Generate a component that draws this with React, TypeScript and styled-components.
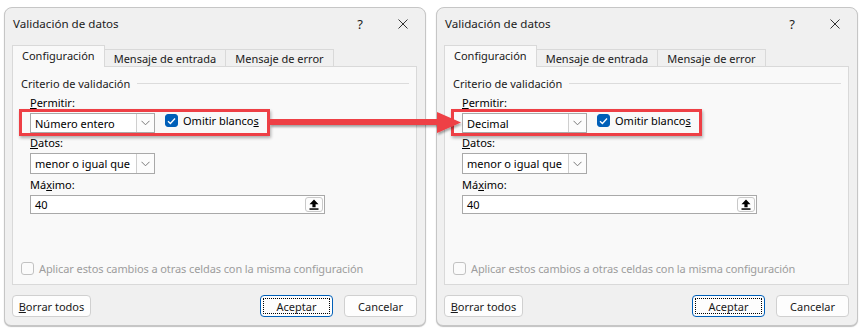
import React from 'react'
import styled, { createGlobalStyle } from 'styled-components'

const GlobalStyle = createGlobalStyle`
  body {
    margin: 0;
    background: #fff;
    font-family: 'Noto Sans', 'Liberation Sans', sans-serif;
  }
`

const Page = styled.div`
  position: relative;
  display: flex;
  gap: 10px;
  width: 862px;
  height: 331px;
  padding: 7px 0 0 4px;
  box-sizing: border-box;
`

const Window = styled.div`
  width: 422px;
  height: 319px;
  box-sizing: border-box;
  display: flex;
  flex-direction: column;
  background: #f0f0f0;
  border: 1px solid #c6c6c6;
  border-radius: 8px 8px 7px 7px;
  box-shadow: 0 1px 1px rgba(0, 0, 0, 0.25);
  font-size: 11px;
  color: #000;
`

const TitleBar = styled.div`
  height: 31px;
  display: flex;
  align-items: center;
  padding-left: 8px;
  font-size: 11.6px;
  color: #1b1b1b;
`

const Title = styled.span`
  flex: 1;
`

const Help = styled.span`
  width: 14px;
  text-align: center;
  font-size: 13px;
  margin-right: 31px;
`

const Close = styled.svg`
  width: 10px;
  height: 10px;
  margin-right: 17px;
`

const Body = styled.div`
  padding: 6px 8px 0 7px;
`

const Tabs = styled.div`
  display: flex;
  align-items: flex-end;
  height: 21px;
`

const Tab = styled.div<{ $active?: boolean }>`
  position: relative;
  z-index: ${p => (p.$active ? 1 : 0)};
  height: ${p => (p.$active ? 22 : 17)}px;
  box-sizing: border-box;
  display: flex;
  align-items: center;
  padding: ${p => (p.$active ? '0 9px 3px' : '0 9px')};
  margin-bottom: ${p => (p.$active ? -1 : 0)}px;
  background: ${p => (p.$active ? '#f9f9f9' : '#f0f0f0')};
  border: 1px solid #d9d9d9;
  border-bottom: none;
  border-left: ${p => (p.$active ? '1px solid #d9d9d9' : 'none')};
  color: #1a1a1a;
`

const Panel = styled.div`
  width: 405px;
  height: 219px;
  box-sizing: border-box;
  display: flex;
  flex-direction: column;
  background: #f9f9f9;
  border: 1px solid #d9d9d9;
  padding: 9px 7px 8px 8px;
`

const GroupHeader = styled.div`
  display: flex;
  align-items: center;
  gap: 7px;
  height: 14px;
  color: #1a1a1a;
`

const Rule = styled.div`
  flex: 1;
  height: 1px;
  background: #dcdcdc;
`

const Fields = styled.div`
  display: flex;
  flex-direction: column;
  align-items: flex-start;
  margin: 6px 0 0 9px;
  flex: 1;
`

const Label = styled.div<{ $gap?: number }>`
  height: 14px;
  line-height: 14px;
  margin-top: ${p => p.$gap ?? 0}px;
  margin-bottom: 3px;
`

const Accel = styled.span`
  text-decoration: underline;
`

const Highlight = styled.div`
  display: flex;
  align-items: flex-start;
  gap: 10px;
  width: 251px;
  box-sizing: border-box;
  margin: -4px 0 -3px -11px;
  padding: 1px 0 0 8px;
  border: 3px solid #ee3f45;
  box-shadow: 1px 2px 3px rgba(0, 0, 0, 0.3);
`

const Select = styled.div<{ $h?: number }>`
  width: 125px;
  height: ${p => p.$h ?? 20}px;
  box-sizing: border-box;
  display: flex;
  background: #fff;
  border: 1px solid #a9a9a9;
`

const SelectValue = styled.div`
  flex: 1;
  display: flex;
  align-items: center;
  padding-left: 4px;
`

const SelectButton = styled.div`
  width: 17px;
  display: flex;
  align-items: center;
  justify-content: center;
  border-left: 1px solid #cfcfcf;
  background: #fcfcfc;
`

const CheckRow = styled.label<{ $disabled?: boolean }>`
  display: flex;
  align-items: center;
  gap: 5px;
  height: 13px;
  margin-top: 1px;
  color: ${p => (p.$disabled ? '#9d9d9d' : '#000')};
`

const Box = styled.span<{ $checked?: boolean }>`
  width: 13px;
  height: 13px;
  box-sizing: border-box;
  display: flex;
  align-items: center;
  justify-content: center;
  border-radius: 3px;
  background: ${p => (p.$checked ? '#005fb8' : '#fbfbfb')};
  border: 1px solid ${p => (p.$checked ? '#005fb8' : '#c2c2c2')};
`

const TextInput = styled.div`
  width: 295px;
  height: 19px;
  box-sizing: border-box;
  display: flex;
  align-items: center;
  background: #fff;
  border: 1px solid #a9a9a9;
  padding: 0 1px 0 4px;
`

const InputText = styled.span`
  flex: 1;
`

const Collapse = styled.div`
  width: 18px;
  height: 15px;
  box-sizing: border-box;
  display: flex;
  align-items: center;
  justify-content: center;
  border: 1px solid #c9c9c9;
  border-radius: 3px;
  background: #fdfdfd;
`

const ApplyRow = styled(CheckRow)`
  margin: 0 0 1px 0;
  height: 14px;
  letter-spacing: -0.1px;
`

const Footer = styled.div`
  display: flex;
  gap: 11px;
  padding: 10px 8px 0 7px;
`

const Spacer = styled.div`
  flex: 1;
`

const Button = styled.div<{ $w?: number; $default?: boolean }>`
  width: ${p => p.$w ?? 73}px;
  height: 22px;
  box-sizing: border-box;
  display: flex;
  align-items: center;
  justify-content: center;
  background: #fdfdfd;
  border: 1px solid ${p => (p.$default ? '#005fb8' : '#d0d0d0')};
  border-radius: 4px;
  color: #1a1a1a;
  outline: ${p => (p.$default ? '1px dotted #000' : 'none')};
  outline-offset: -4px;
`

const Arrow = styled.svg`
  position: absolute;
  left: 262px;
  top: 104px;
  overflow: visible;
`

const Chevron = () => (
  <svg width="9" height="6" viewBox="0 0 9 6">
    <polyline points="0.5,0.8 4.5,4.8 8.5,0.8" fill="none" stroke="#7a7a7a" strokeWidth="1" />
  </svg>
)

const Tick = () => (
  <svg width="9" height="8" viewBox="0 0 9 8">
    <polyline points="1,4.2 3.4,6.5 8,1.5" fill="none" stroke="#fff" strokeWidth="1.3" />
  </svg>
)

const UpIcon = () => (
  <svg width="10" height="11" viewBox="0 0 10 11">
    <path d="M5 0.5 L9.5 5.2 H6.6 V8.3 H3.4 V5.2 H0.5 Z" fill="#000" />
    <rect x="0.5" y="9.3" width="9" height="1.5" fill="#000" />
  </svg>
)

interface DialogProps {
  allow: string
}

const Dialog = ({ allow }: DialogProps) => (
  <Window>
    <TitleBar>
      <Title>Validación de datos</Title>
      <Help>?</Help>
      <Close viewBox="0 0 10 10">
        <path d="M0.5 0.5 L9.5 9.5 M9.5 0.5 L0.5 9.5" stroke="#333" strokeWidth="1" />
      </Close>
    </TitleBar>
    <Body>
      <Tabs>
        <Tab $active>Configuración</Tab>
        <Tab>Mensaje de entrada</Tab>
        <Tab>Mensaje de error</Tab>
      </Tabs>
      <Panel>
        <GroupHeader>
          Criterio de validación
          <Rule />
        </GroupHeader>
        <Fields>
          <Label $gap={0}>
            <Accel>P</Accel>ermitir:
          </Label>
          <Highlight>
            <Select>
              <SelectValue>{allow}</SelectValue>
              <SelectButton>
                <Chevron />
              </SelectButton>
            </Select>
            <CheckRow>
              <Box $checked>
                <Tick />
              </Box>
              <span>
                Omitir blanco<Accel>s</Accel>
              </span>
            </CheckRow>
          </Highlight>
          <Label $gap={3}>
            <Accel>D</Accel>atos:
          </Label>
          <Select $h={21}>
            <SelectValue>menor o igual que</SelectValue>
            <SelectButton>
              <Chevron />
            </SelectButton>
          </Select>
          <Label $gap={4}>
            Má<Accel>x</Accel>imo:
          </Label>
          <TextInput>
            <InputText>40</InputText>
            <Collapse>
              <UpIcon />
            </Collapse>
          </TextInput>
          <Spacer />
        </Fields>
        <ApplyRow $disabled>
          <Box />
          <span>Aplicar estos cambios a otras celdas con la misma configuración</span>
        </ApplyRow>
      </Panel>
    </Body>
    <Footer>
      <Button $w={79}>
        <span>
          <Accel>B</Accel>orrar todos
        </span>
      </Button>
      <Spacer />
      <Button $default>Aceptar</Button>
      <Button>Cancelar</Button>
    </Footer>
  </Window>
)

export default function App() {
  return (
    <>
      <GlobalStyle />
      <Page>
        <Dialog allow="Número entero" />
        <Dialog allow="Decimal" />
        <Arrow width="204" height="36" viewBox="0 0 204 36">
          <defs>
            <filter id="shadow" x="-10%" y="-50%" width="120%" height="200%">
              <feDropShadow dx="1" dy="2" stdDeviation="1.2" floodColor="#000" floodOpacity="0.35" />
            </filter>
          </defs>
          <g filter="url(#shadow)" fill="#ee3f45">
            <rect x="8" y="15" width="168" height="6" />
            <polygon points="175,8 199,18.5 175,29" />
          </g>
        </Arrow>
      </Page>
    </>
  )
}
